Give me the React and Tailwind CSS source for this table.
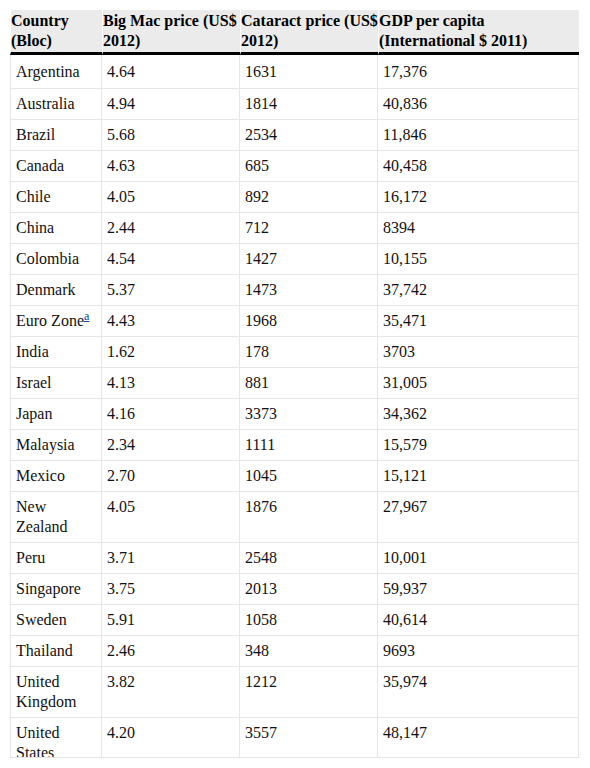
import React from "react";

const rows = [
  ["Argentina", "4.64", "1631", "17,376"],
  ["Australia", "4.94", "1814", "40,836"],
  ["Brazil", "5.68", "2534", "11,846"],
  ["Canada", "4.63", "685", "40,458"],
  ["Chile", "4.05", "892", "16,172"],
  ["China", "2.44", "712", "8394"],
  ["Colombia", "4.54", "1427", "10,155"],
  ["Denmark", "5.37", "1473", "37,742"],
  ["Euro Zone", "4.43", "1968", "35,471", true],
  ["India", "1.62", "178", "3703"],
  ["Israel", "4.13", "881", "31,005"],
  ["Japan", "4.16", "3373", "34,362"],
  ["Malaysia", "2.34", "1111", "15,579"],
  ["Mexico", "2.70", "1045", "15,121"],
  ["New Zealand", "4.05", "1876", "27,967"],
  ["Peru", "3.71", "2548", "10,001"],
  ["Singapore", "3.75", "2013", "59,937"],
  ["Sweden", "5.91", "1058", "40,614"],
  ["Thailand", "2.46", "348", "9693"],
  ["United Kingdom", "3.82", "1212", "35,974"],
  ["United States", "4.20", "3557", "48,147"],
];

export default function App() {
  const th =
    "bg-[#ebebeb] border-l border-white border-b-[3px] border-b-black p-0 pt-[1px] pb-[1px] text-left align-top font-bold text-black";
  const td =
    "border-r border-b border-[#e6e6e6] px-[5px] align-top text-[#111]";
  return (
    <div className="w-[590px] bg-white font-['Liberation_Serif','Times_New_Roman',serif]">
      <div className="ml-[10px] mt-[10px] w-[570px] h-[748px] overflow-hidden border-b border-[#e6e6e6]">
        <table className="table-fixed border-separate border-spacing-0 w-[569px] text-[16px] leading-[20px]">
          <colgroup>
            <col className="w-[92px]" />
            <col className="w-[138px]" />
            <col className="w-[138px]" />
            <col className="w-[201px]" />
          </colgroup>
          <thead>
            <tr>
              <th className={th}>Country (Bloc)</th>
              <th className={th}>Big Mac price (US$ 2012)</th>
              <th className={th}>Cataract price (US$ 2012)</th>
              <th className={th}>GDP per capita (International $ 2011)</th>
            </tr>
          </thead>
          <tbody>
            {rows.map((r, i) => {
              const pad = i === 0 ? " pt-[7px] pb-[6px]" : " pt-[5px] pb-[5px]";
              return (
                <tr key={r[0]}>
                  <td className={td + pad + " border-l"}>
                    {r[0]}
                    {r[4] && (
                      <sup className="text-[12px] text-[#0645ad] underline leading-none">a</sup>
                    )}
                  </td>
                  <td className={td + pad}>{r[1]}</td>
                  <td className={td + pad}>{r[2]}</td>
                  <td className={td + pad}>{r[3]}</td>
                </tr>
              );
            })}
          </tbody>
        </table>
      </div>
    </div>
  );
}
